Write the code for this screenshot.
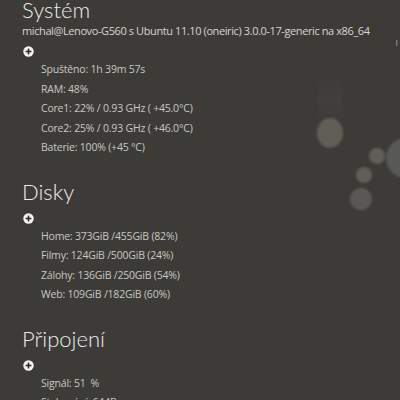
import React from "react";

type Section = {
  title: string;
  subtitle?: string;
  items: string[];
};

const sections: Section[] = [
  {
    title: "Systém",
    subtitle:
      "michal@Lenovo-G560 s Ubuntu 11.10 (oneiric) 3.0.0-17-generic na x86_64",
    items: [
      "Spuštěno: 1h 39m 57s",
      "RAM: 48%",
      "Core1: 22% / 0.93 GHz ( +45.0°C)",
      "Core2: 25% / 0.93 GHz ( +46.0°C)",
      "Baterie: 100% (+45 °C)",
    ],
  },
  {
    title: "Disky",
    items: [
      "Home: 373GiB /455GiB (82%)",
      "Filmy: 124GiB /500GiB (24%)",
      "Zálohy: 136GiB /250GiB (54%)",
      "Web: 109GiB /182GiB (60%)",
    ],
  },
  {
    title: "Připojení",
    items: ["Signál: 51  %", "Stahování: 644B"],
  },
];

function PlusIcon() {
  return (
    <svg width="11" height="11" viewBox="0 0 11 11" className="block">
      <circle cx="5.5" cy="5.5" r="5.2" fill="#f4f4f2" />
      <rect x="2.6" y="4.7" width="5.8" height="1.6" fill="#2e2d2a" />
      <rect x="4.7" y="2.6" width="1.6" height="5.8" fill="#2e2d2a" />
    </svg>
  );
}

function Bokeh() {
  return (
    <svg
      className="absolute inset-0 pointer-events-none"
      width="400"
      height="400"
      viewBox="0 0 400 400"
    >
      <defs>
        <filter id="soft" x="-50%" y="-50%" width="200%" height="200%">
          <feGaussianBlur stdDeviation="1.2" />
        </filter>
        <linearGradient id="glow" x1="0" y1="0" x2="0" y2="1">
          <stop offset="0" stopColor="#454440" stopOpacity="0" />
          <stop offset="0.5" stopColor="#454440" stopOpacity="0.5" />
          <stop offset="1" stopColor="#454440" stopOpacity="0" />
        </linearGradient>
      </defs>
      <rect x="318" y="75" width="24" height="50" fill="url(#glow)" />
      <g filter="url(#soft)" fill="#5f5e59">
        <ellipse cx="330" cy="133" rx="13" ry="15" />
        <circle cx="377" cy="156" r="8" />
        <circle cx="406" cy="158" r="20" fill="#595854" />
        <circle cx="364" cy="175" r="8" />
        <circle cx="361" cy="199" r="11" fill="#5a5954" />
      </g>
      <rect x="396" y="40" width="1.5" height="6" fill="#7a7974" />
    </svg>
  );
}

export default function App() {
  return (
    <div
      className="relative w-[400px] h-[400px] overflow-hidden bg-[#3c3b38]"
      style={{ fontFamily: '"Open Sans", "Noto Sans", sans-serif' }}
    >
      <Bokeh />
      <div className="relative pl-[22px] -mt-[4px]">
        {sections.map((s) => (
          <section key={s.title} className="mb-[20px]">
            <h1
              className="text-[22px] leading-[28px] font-light text-[#ecebe8]"
              style={{ fontFamily: 'Lato, "Open Sans", sans-serif' }}
            >
              {s.title}
            </h1>
            {s.subtitle && (
              <p className="text-[11px] leading-[14px] text-[#d6d5d0] whitespace-nowrap tracking-[-0.4px]">
                {s.subtitle}
              </p>
            )}
            <div className={s.subtitle ? "mt-[8px] ml-[1px]" : "mt-[7px] ml-[1px]"}>
              <PlusIcon />
            </div>
            <ul className="mt-[3px] ml-[19px]">
              {s.items.map((it) => (
                <li
                  key={it}
                  className="text-[10.5px] leading-[19.5px] text-[#c9c8c2] tracking-[-0.2px] whitespace-pre"
                >
                  {it}
                </li>
              ))}
            </ul>
          </section>
        ))}
      </div>
    </div>
  );
}
